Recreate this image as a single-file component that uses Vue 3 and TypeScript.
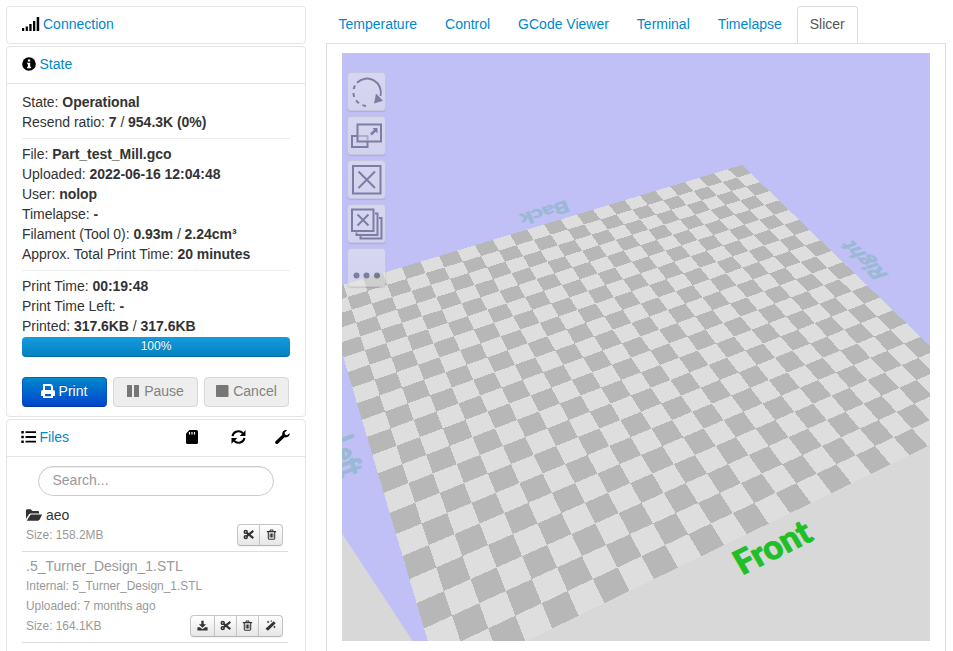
<script setup lang="ts">
interface Label {
  text: string
  matrix: string
  length: number
  fill: string
}

const tabs = ['Temperature', 'Control', 'GCode Viewer', 'Terminal', 'Timelapse', 'Slicer']
const activeTab = 'Slicer'

const stateGroups: { label: string; value: string; second?: string }[][] = [
  [
    { label: 'State', value: 'Operational' },
    { label: 'Resend ratio', value: '7', second: '954.3K (0%)' },
  ],
  [
    { label: 'File', value: 'Part_test_Mill.gco' },
    { label: 'Uploaded', value: '2022-06-16 12:04:48' },
    { label: 'User', value: 'nolop' },
    { label: 'Timelapse', value: '-' },
    { label: 'Filament (Tool 0)', value: '0.93m', second: '2.24cm³' },
    { label: 'Approx. Total Print Time', value: '20 minutes' },
  ],
  [
    { label: 'Print Time', value: '00:19:48' },
    { label: 'Print Time Left', value: '-' },
    { label: 'Printed', value: '317.6KB', second: '317.6KB' },
  ],
]

// The bed is 250 x 210 mm, drawn as 10 mm squares seen through a fixed camera.
const COLS = 25
const ROWS = 21
const camera = [-18.96336, -1.39199, 742.0206, 3.040656, 6.152231, 164.868, -0.006869889, -0.01362865]

function project(u: number, v: number): [number, number] {
  const [a, b, c, d, e, f, g, h] = camera
  const w = g * u + h * v + 1
  return [(a * u + b * v + c) / w, (d * u + e * v + f) / w]
}

function quad(u0: number, v0: number, u1: number, v1: number): string {
  const corners = [project(u0, v0), project(u1, v0), project(u1, v1), project(u0, v1)]
  return 'M' + corners.map(([x, y]) => `${x.toFixed(2)} ${y.toFixed(2)}`).join('L') + 'Z'
}

const bed = quad(0, 0, COLS, ROWS)
let darkSquares = ''
for (let v = 0; v < ROWS; v++) {
  for (let u = 0; u < COLS; u++) {
    if ((u + v) % 2 === 0) darkSquares += quad(u, v, u + 1, v + 1)
  }
}

// base: direction and length of the baseline; up: direction and height of a capital
function label(text: string, origin: number[], base: number[], up: number[], fill: string): Label {
  const m = [base[0] / 100, base[1] / 100, -up[0] / 29, -up[1] / 29, origin[0], origin[1]]
  return { text, matrix: `matrix(${m.map((n) => n.toFixed(4)).join(' ')})`, length: 100, fill }
}

const labels: Label[] = [
  label('Front', [742, 575.5], [73, -36], [-12.5, -21.5], '#20bf28'),
  label('Back', [566.5, 200], [-48, 14.5], [4.5, 11], '#9ab9d3'),
  label('Right', [889.5, 275.5], [-37, -35], [-14.9, 4.8], '#9ab9d3'),
  label('Left', [329, 441], [11.5, 38], [23.3, -8.6], '#9ab9d3'),
]
</script>

<template>
  <svg class="defs" aria-hidden="true">
    <symbol id="i-cut" viewBox="0 0 16 16">
      <g fill="none" stroke="currentColor" stroke-width="2.3">
        <circle cx="4" cy="4.2" r="2.1" />
        <circle cx="4" cy="11.8" r="2.1" />
        <path d="M5.6 5.6 15 13.2M5.6 10.4 15 2.8" stroke-width="3.1" />
      </g>
    </symbol>
    <symbol id="i-trash" viewBox="0 0 16 16">
      <path d="M3.300 4.500v9a1.300 1.300 0 0 0 1.300 1.300h6.800a1.300 1.300 0 0 0 1.300-1.300v-9M1.200 3.800h13.600M5.500 3.500l.8-2h3.400l.8 2M6 6.500v6M8 6.500v6M10 6.500v6" fill="none" stroke="currentColor" stroke-width="1.500" />
    </symbol>
    <symbol id="i-download" viewBox="0 0 16 16">
      <path d="M6.3 1h3.4v5h3.6L8 11.3 2.7 6h3.6zM.6 10.5h3.6L8 13.6l3.8-3.1h3.6v4.7H.6z" fill="currentColor" />
    </symbol>
    <symbol id="i-magic" viewBox="0 0 16 16">
      <path d="M12.600 1.800 15.500 4.600 4.300 15.800 .7 12.700zM4.500.5l.7 1.600 1.600.7-1.600.7-.7 1.600-.7-1.600-1.600-.7 1.600-.7zM9 0l.5 1.100 1.100.5-1.100.5L9 3.200l-.5-1.100-1.100-.5 1.100-.5zM13.700 8l.7 1.500 1.500.7-1.500.7-.7 1.500-.7-1.500-1.500-.7 1.500-.7z" fill="currentColor" />
    </symbol>
  </svg>

  <div class="page">
    <aside class="sidebar">
      <section class="panel">
        <h2 class="panel-head">
          <svg class="signal" viewBox="0 0 18 14"><path d="M0 11h2.200v3H0zM3.700 9.500h2.200V14H3.700zM7.300 7h2.300v7H7.300zM11 4h2.300v10H11zM14.700 0h2.500v14h-2.500z" /></svg>
          <a>Connection</a>
        </h2>
      </section>

      <section class="panel">
        <h2 class="panel-head">
          <svg class="info" viewBox="0 0 14 14"><circle cx="7" cy="7" r="6.800" /><path d="M5.900 2.600h2.300v2H5.900zM5.200 5.700h3v4h.9v1.500H5.100V9.700H6V7.200h-.8z" fill="#fff" /></svg>
          <a>State</a>
        </h2>
        <div class="panel-body">
          <div v-for="(group, i) in stateGroups" :key="i" class="group">
            <div v-for="row in group" :key="row.label">
              {{ row.label }}: <strong>{{ row.value }}</strong><template v-if="row.second"> / <strong>{{ row.second }}</strong></template>
            </div>
          </div>
          <div class="progress">100%</div>
          <div class="job">
            <button class="btn primary">
              <svg viewBox="0 0 14 14"><path d="M2 0h8l2 2v4h-2V3L9.300 2H4v4H2zM1.800 6h10.400Q14 6 14 7.800V12h-2v2H2v-2H0V7.800Q0 6 1.800 6zM4 10v2.200h6V10z" fill="#fff" fill-rule="evenodd" /></svg>
              Print
            </button>
            <button class="btn">
              <svg viewBox="0 0 14 14"><path d="M1 1h5v12H1zM8 1h5v12H8z" fill="#777" /></svg>
              Pause
            </button>
            <button class="btn">
              <svg viewBox="0 0 14 14"><rect x="1" y="1" width="12.500" height="12" rx=".7" fill="#777" /></svg>
              Cancel
            </button>
          </div>
        </div>
      </section>

      <section class="panel files">
        <h2 class="panel-head">
          <svg class="list" viewBox="0 0 15 14"><path d="M.3 1h2.500v2.500H.3zM.3 5.700h2.500v2.500H.3zM.3 10.400h2.500v2.500H.3zM4.500 1.200H15v1.900H4.500zM4.500 6H15v1.900H4.500zM4.500 10.700H15v1.900H4.500z" /></svg>
          <a>Files</a>
          <span class="tools">
            <svg class="sd" viewBox="0 0 12 14"><path d="M3.500 0H10.500Q12 0 12 1.500v11Q12 14 10.500 14h-9Q0 14 0 12.500V3.500z" /><path d="M3.500 2v2.500M6 2v2.500M8.500 2v2.500" stroke="#fff" stroke-width="1.200" /></svg>
            <svg class="sync" viewBox="0 0 15 14"><path d="M1.500 6.200A6 5.600 0 0 1 12 3.300M13.500 7.800A6 5.600 0 0 1 3 10.700" fill="none" stroke="#000" stroke-width="2" /><path d="M14.500 0v6H8.600l2.300-2.200 1.800-1.500zM.5 14V8h5.900L4.100 10.200 2.300 11.700z" /></svg>
            <svg class="wrench" viewBox="0 0 15 14"><path d="M14.600 3.200 12 5.300 9.900 4.600 9.600 2.500 12.200.3C9.600-.5 6.700 1.200 7.300 4.800L.6 11.200a1.700 1.700 0 0 0 2.400 2.400L9.500 7.300C12.900 8 15.300 5.500 14.600 3.200z" /></svg>
          </span>
        </h2>
        <div class="files-body">
          <input class="search" type="text" placeholder="Search..." />
          <div class="entry">
            <div class="name folder">
              <svg viewBox="0 0 16 12"><path d="M0 10V1.500Q0 .3 1.200.3h3.500L6.400 2h5.500q1.200 0 1.200 1.200v1.200H4.700Q3.500 4.400 3 5.300z" /><path d="M4.600 5.400H15.600q.6.100.3.700L13.700 10.600q-.6 1.100-1.700 1.100H.8z" /></svg>
              aeo
            </div>
            <div class="foot">
              <span>Size: 158.2MB</span>
              <span class="actions">
                <button v-for="icon in ['cut', 'trash']" :key="icon"><svg><use :href="'#i-' + icon" /></svg></button>
              </span>
            </div>
          </div>
          <div class="entry muted">
            <div class="name">.5_Turner_Design_1.STL</div>
            <div class="meta">Internal: 5_Turner_Design_1.STL</div>
            <div class="meta">Uploaded: 7 months ago</div>
            <div class="foot">
              <span>Size: 164.1KB</span>
              <span class="actions wide">
                <button v-for="icon in ['download', 'cut', 'trash', 'magic']" :key="icon"><svg><use :href="'#i-' + icon" /></svg></button>
              </span>
            </div>
          </div>
        </div>
      </section>
    </aside>

    <main class="main">
      <nav class="tabs">
        <a v-for="tab in tabs" :key="tab" :class="{ active: tab === activeTab }">{{ tab }}</a>
      </nav>
      <div class="content">
        <div class="viewport">
          <svg class="scene" viewBox="342 53 588 588">
            <path d="M342 53h588v588H342z" fill="#d8d8d8" />
            <path d="M342 53h588v291L742 400 427.500 641H412.700L342 533.500z" fill="#c0bff6" />
            <path :d="bed" fill="#dedede" shape-rendering="crispEdges" />
            <path :d="darkSquares" fill="#b7b7b7" shape-rendering="crispEdges" />
            <text v-for="l in labels" :key="l.text" :transform="l.matrix" :textLength="l.length" lengthAdjust="spacingAndGlyphs" :fill="l.fill" :stroke="l.fill" class="bed-label">{{ l.text }}</text>
          </svg>
          <div class="toolbar">
            <button>
              <svg viewBox="0 0 37 37"><g fill="none" stroke="#3c3c55" stroke-width="2"><path d="M9 9.700A14 14 0 0 1 32.500 23" /><path d="M7 12.500A14 14 0 0 0 18 33" stroke-dasharray="4 3.800" /></g><path d="M28 20.500 35 27.700 26 30.500z" fill="#3c3c55" /></svg>
            </button>
            <button>
              <svg viewBox="0 0 37 37"><g fill="none" stroke="#3c3c55" stroke-width="2"><path d="M9.500 7.500h23.500v17H9.500z" /><path d="M9.500 19H4v11H19.500v-5.500" /><path d="M10.500 19h9v4.500" opacity=".45" /><path d="M23 17.500 28 12.500" stroke-width="2.500" /></g><path d="M24.500 11h5v5.500z" fill="#3c3c55" /></svg>
            </button>
            <button>
              <svg viewBox="0 0 37 37"><path d="M5 5h27.500v27.500H5zM10.500 10.500 27 27M27 10.500 10.500 27" fill="none" stroke="#3c3c55" stroke-width="2" /></svg>
            </button>
            <button>
              <svg viewBox="0 0 37 37"><path d="M4 4.500h21.500v21.500H4zM9.500 9.500 20.500 20.500M20.500 9.500 9.500 20.500M27 8.500h2.500v21.500H8.500v-2.500M31 13h2.500v20.500H12.500V31" fill="none" stroke="#3c3c55" stroke-width="2" /></svg>
            </button>
            <button>
              <svg viewBox="0 0 37 37"><g fill="#3c3c55"><circle cx="8.500" cy="26.500" r="3" /><circle cx="18.500" cy="26.500" r="3" /><circle cx="29" cy="26.500" r="3" /></g></svg>
            </button>
          </div>
        </div>
      </div>
    </main>
  </div>
</template>

<style>
html,
body {
  height: 651px;
  overflow: hidden;
  background: #fff;
}
</style>

<style scoped>
.defs {
  display: none;
}
.page {
  box-sizing: border-box;
  display: flex;
  align-items: flex-start;
  gap: 20px;
  width: 953px;
  height: 651px;
  padding: 6px 7px 0 6px;
  overflow: hidden;
  color: #333;
  font: 14px/20px "Liberation Sans", sans-serif;
}
.sidebar {
  width: 300px;
  flex: none;
}
.panel {
  box-sizing: border-box;
  margin-bottom: 2px;
  border: 1px solid #e5e5e5;
  border-radius: 4px;
}
.panel-head {
  display: flex;
  align-items: center;
  height: 20px;
  margin: 0;
  padding: 7px 15px 9px;
  font-size: 14px;
  font-weight: normal;
}
a {
  color: #08c;
}
.signal {
  width: 18px;
  height: 14px;
  margin-right: 3px;
}
.info {
  width: 14px;
  height: 14px;
  margin-right: 3.5px;
}
.list {
  width: 15px;
  height: 14px;
  margin: 0 3.5px 0 -1px;
}
.tools {
  display: flex;
  align-items: center;
  margin-left: auto;
}
.sd {
  width: 12px;
  height: 14px;
}
.sync {
  width: 15px;
  height: 14px;
  margin: 0 29px 0 33px;
}
.wrench {
  width: 15px;
  height: 14px;
}
.panel-body {
  padding: 8px 15px 9px;
  border-top: 1px solid #e5e5e5;
}
.group {
  letter-spacing: -0.03px;
}
.group + .group {
  margin-top: 6px;
  padding-top: 5px;
  border-top: 1px solid #eee;
}
.progress {
  height: 20px;
  margin: 1px 0 20px;
  border-radius: 4px;
  background: linear-gradient(#149bdf, #0480be);
  box-shadow: inset 0 -1px 0 rgba(0, 0, 0, 0.15);
  color: #fff;
  font-size: 12px;
  line-height: 18px;
  text-align: center;
  text-shadow: 0 -1px 0 rgba(0, 0, 0, 0.25);
}
.job {
  display: flex;
  gap: 6px;
}
.btn {
  display: flex;
  align-items: center;
  justify-content: center;
  gap: 4px;
  box-sizing: border-box;
  width: 85px;
  height: 30px;
  padding: 0 1px 2px 0;
  border: 1px solid #d8d8d8;
  border-radius: 4px;
  background: #eee;
  color: #828282;
  font: inherit;
}
.btn svg {
  width: 14px;
  height: 14px;
}
.btn.primary {
  border-color: #0a5fc0 #0a4fc0 #0038a8;
  background: linear-gradient(#08c, #04c);
  color: #fff;
  text-shadow: 0 -1px 0 rgba(0, 0, 0, 0.25);
}
.files {
  height: 262px;
}
.files-body {
  padding: 9px 17px 0 15px;
  border-top: 1px solid #e5e5e5;
}
.search {
  display: block;
  box-sizing: border-box;
  width: 236px;
  height: 30px;
  margin: 0 0 9px 16px;
  padding: 0 14px 2px 13.5px;
  border: 1px solid #ccc;
  border-radius: 15px;
  box-shadow: inset 0 1px 1px rgba(0, 0, 0, 0.075);
  font: inherit;
}
.search::placeholder {
  color: #999;
  opacity: 1;
}
.entry {
  padding: 0 5px 6px 4px;
  border-bottom: 1px solid #ddd;
}
.entry + .entry {
  padding-top: 4px;
}
.name {
  height: 20px;
}
.folder {
  display: flex;
  align-items: center;
  gap: 4px;
}
.folder svg {
  width: 16px;
  height: 12px;
  fill: #333;
}
.muted .name {
  color: #999;
}
.meta,
.foot {
  height: 20px;
  color: #999;
  font-size: 11.9px;
}
.foot {
  display: flex;
  justify-content: space-between;
}
.actions {
  display: flex;
  height: 22px;
  margin-top: -1px;
}
.actions button {
  display: flex;
  align-items: center;
  justify-content: center;
  box-sizing: border-box;
  width: 23px;
  height: 22px;
  margin-left: -1px;
  padding: 0 0 2px;
  border: 1px solid #c5c5c5;
  border-bottom-color: #b3b3b3;
  background: linear-gradient(#fff, #e6e6e6);
  box-shadow: 0 1px 2px rgba(0, 0, 0, 0.05);
  color: #333;
}
.actions button:first-child {
  border-radius: 4px 0 0 4px;
}
.actions button:last-child {
  width: 24px;
  border-radius: 0 4px 4px 0;
}
.actions.wide button:first-child,
.actions.wide button:last-child {
  width: 25px;
}
.actions svg {
  width: 11px;
  height: 11px;
}
.main {
  width: 620px;
  flex: none;
}
.tabs {
  display: flex;
  gap: 1.95px;
  height: 37px;
  border-bottom: 1px solid #ddd;
}
.tabs a {
  height: 20px;
  padding: 7px 12px 9px;
  border: 1px solid transparent;
  border-bottom: 0;
}
.tabs a:first-child {
  padding-left: 11.5px;
}
.tabs a.active {
  border-color: #ddd;
  border-radius: 4px 4px 0 0;
  background: #fff;
  color: #555;
}
.content {
  height: 620px;
  padding: 9px 15px 0;
  border: solid #ddd;
  border-width: 0 1px;
}
.viewport {
  position: relative;
  width: 588px;
  height: 588px;
}
.scene {
  display: block;
  width: 588px;
  height: 588px;
}
.bed-label {
  font: 900 40px Lato, "Open Sans", sans-serif;
  stroke-width: 1;
}
.toolbar {
  position: absolute;
  top: 18.5px;
  left: 4.5px;
  display: flex;
  flex-direction: column;
  gap: 5px;
}
.toolbar button {
  box-sizing: border-box;
  width: 39px;
  height: 39px;
  padding: 0;
  border: 1px solid #ccc;
  border-radius: 4px;
  background: linear-gradient(#eee, #e6e6e6);
  box-shadow: 0 1px 1px rgba(0, 0, 0, 0.2);
  opacity: 0.5;
}
.toolbar svg {
  display: block;
  width: 37px;
  height: 37px;
}
</style>
